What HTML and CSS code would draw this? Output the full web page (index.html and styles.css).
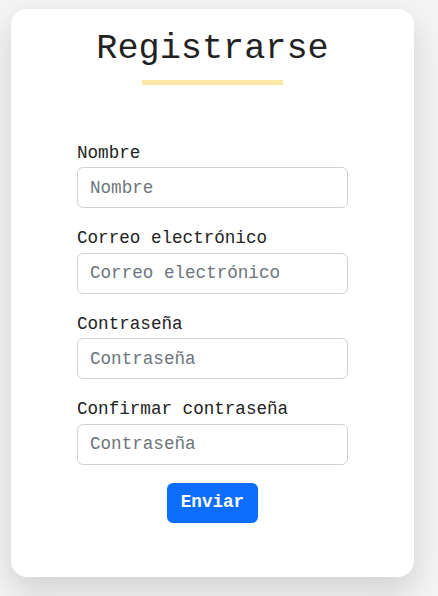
FILE: index.html
```html
<!DOCTYPE html>
<html lang="es">
<head>
<meta charset="utf-8">
<title>Registrarse</title>
<link rel="stylesheet" href="styles.css">
</head>
<body>
<main class="page">
  <section class="card">
    <h1 class="title">Registrarse</h1>
    <div class="title-bar"></div>
    <form class="form">
      <div class="field">
        <label class="label" for="nombre">Nombre</label>
        <input class="input" id="nombre" type="text" placeholder="Nombre">
      </div>
      <div class="field">
        <label class="label" for="correo">Correo electrónico</label>
        <input class="input" id="correo" type="email" placeholder="Correo electrónico">
      </div>
      <div class="field">
        <label class="label" for="pass">Contraseña</label>
        <input class="input" id="pass" type="password" placeholder="Contraseña">
      </div>
      <div class="field">
        <label class="label" for="pass2">Confirmar contraseña</label>
        <input class="input" id="pass2" type="password" placeholder="Contraseña">
      </div>
      <div class="actions">
        <button class="btn" type="button">Enviar</button>
      </div>
    </form>
  </section>
</main>
</body>
</html>
```
FILE: styles.css
```css
* { box-sizing: border-box; }
html, body { margin: 0; }
html { background: #f4f4f4; }
body {
  background: #f4f4f4;
  min-height: 596px;
  font-family: "Courier New", "Nimbus Mono PS", "Nimbus Mono L", "FreeMono", "Liberation Mono", monospace;
  color: #222;
}
.page {
  padding: 9px 24px 0 11px;
}
.card {
  background: #fff;
  border-radius: 16px;
  box-shadow: 0 14px 34px rgba(0,0,0,0.15);
  height: 568px;
  padding: 20px 0 0;
  display: flex;
  flex-direction: column;
  align-items: center;
}
.title {
  margin: 0;
  font-size: 35.2px;
  font-weight: normal;
  line-height: 40px;
  color: #222;
}
.title-bar {
  width: 141px;
  height: 5px;
  background: #fce8a4;
  margin-top: 11px;
}
.form {
  width: 271px;
  margin-top: 55px;
  display: flex;
  flex-direction: column;
  gap: 17px;
}
.field {
  display: flex;
  flex-direction: column;
}
.label {
  font-size: 17.6px;
  line-height: 26.4px;
  margin-bottom: 1px;
  color: #222;
}
.input {
  font-family: inherit;
  font-size: 17.6px;
  line-height: 26.4px;
  height: 41px;
  padding: 6px 12px;
  border: 1px solid #cfd3d8;
  border-radius: 6px;
  color: #222;
  background: #fff;
  outline: none;
}
.input::placeholder { color: #6c757d; }
.actions {
  display: flex;
  justify-content: center;
  margin-top: 1px;
}
.btn {
  font-family: inherit;
  font-size: 17.6px;
  font-weight: bold;
  line-height: 26.4px;
  height: 40px;
  width: 91px;
  padding: 6px 12px;
  border: none;
  border-radius: 6px;
  background: #0d6efd;
  color: #fff;
}
```
